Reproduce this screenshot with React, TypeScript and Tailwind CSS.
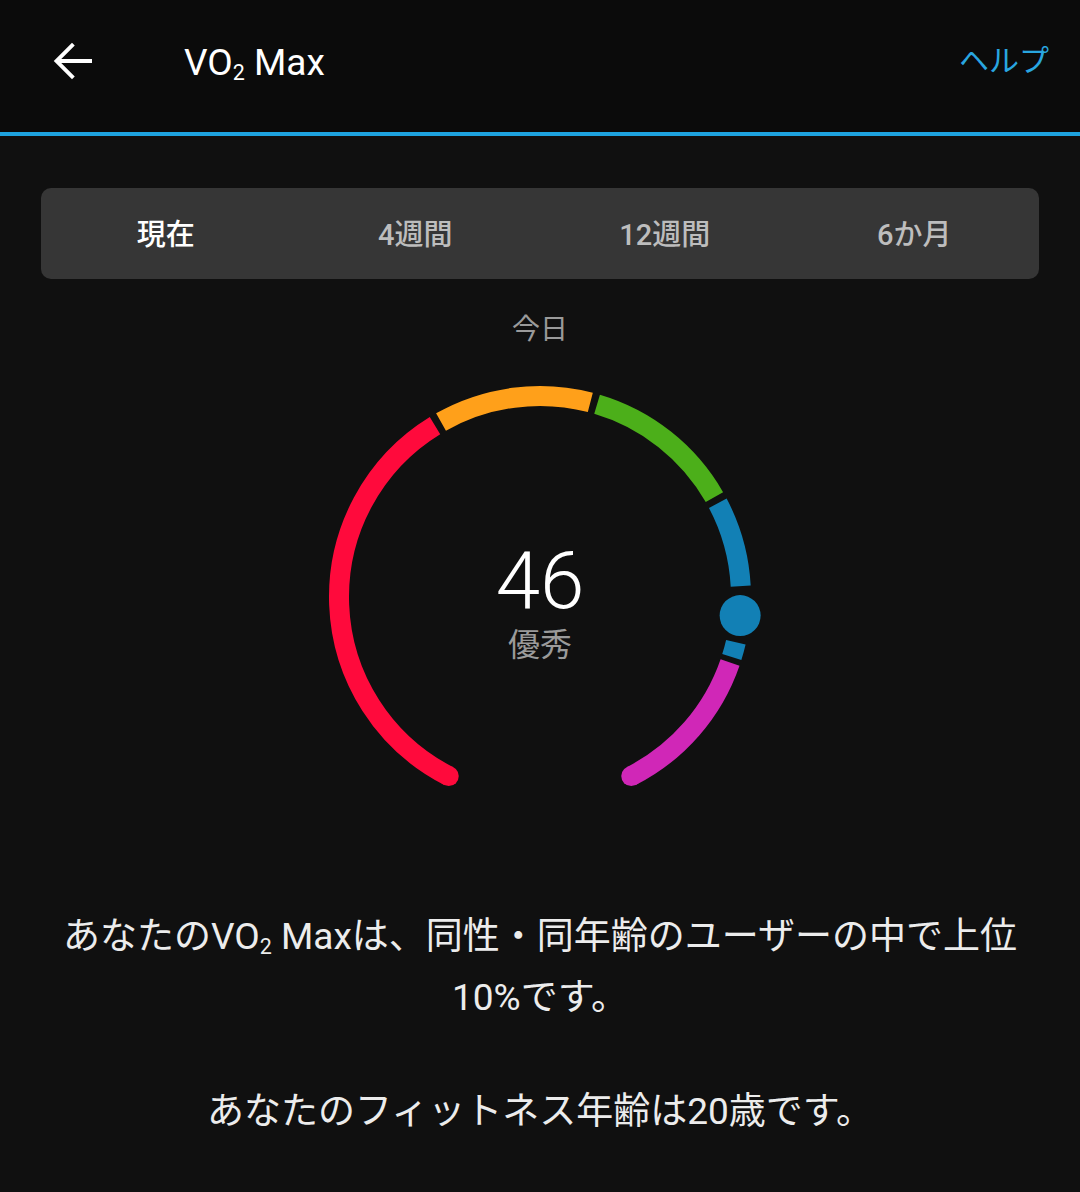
import React from "react";

const R = 201;
const CX = 240;
const CY = 240;

function pt(a: number): [number, number] {
  const t = (a * Math.PI) / 180;
  return [CX + R * Math.cos(t), CY + R * Math.sin(t)];
}

function arc(a1: number, a2: number): string {
  const [x1, y1] = pt(a1);
  const [x2, y2] = pt(a2);
  const large = a2 - a1 > 180 ? 1 : 0;
  return `M ${x1.toFixed(2)} ${y1.toFixed(2)} A ${R} ${R} 0 ${large} 1 ${x2.toFixed(2)} ${y2.toFixed(2)}`;
}

const segs: { a1: number; a2: number; color: string }[] = [
  { a1: 117, a2: 238.5, color: "#ff0a3c" },
  { a1: 240.5, a2: 284.5, color: "#ffa01a" },
  { a1: 286.5, a2: 330.2, color: "#4caf1a" },
  { a1: 332.2, a2: 356.9, color: "#1280b5" },
  { a1: 373, a2: 377.4, color: "#1280b5" },
  { a1: 379, a2: 423, color: "#d027b7" },
];

function Gauge() {
  const [sx, sy] = pt(117);
  const [ex, ey] = pt(63);
  const [dx, dy] = pt(5.3);
  return (
    <svg width="480" height="480" viewBox="0 0 480 480" className="block">
      {segs.map((s, i) => (
        <path
          key={i}
          d={arc(s.a1, s.a2)}
          fill="none"
          stroke={s.color}
          strokeWidth={20}
          strokeLinecap="butt"
        />
      ))}
      <circle cx={sx} cy={sy} r={10} fill="#ff0a3c" />
      <circle cx={ex} cy={ey} r={10} fill="#d027b7" />
      <circle cx={dx} cy={dy} r={20.5} fill="#1280b5" />
    </svg>
  );
}

export default function App() {
  const font = { fontFamily: 'Roboto, "Noto Sans CJK JP", sans-serif' };
  return (
    <div className="w-[1080px] min-h-[1192px] bg-[#101010]" style={font}>
      <header className="h-[132px] bg-[#0b0b0b] flex items-center pl-[42px] pr-[31px] pb-[10px]">
        <svg width="60" height="60" viewBox="0 0 24 24" className="block">
          <path
            d="M20 11.2H7.7l5.4-5.4L12 4.7l-7.3 7.3 7.3 7.3 1.1-1.1-5.4-5.4H20z"
            fill="#ffffff"
          />
        </svg>
        <div className="ml-[82px] text-[37px] text-white leading-none pt-[2px]">
          VO<span className="inline-block text-[0.58em] translate-y-[0.22em]">2</span> Max
        </div>
        <div className="ml-auto text-[30px] text-[#29a6e0] leading-none">ヘルプ</div>
      </header>
      <div className="h-[4px] bg-[#1ea3df]" />
      <main className="px-[41px] pt-[52px]">
        <div className="h-[91px] rounded-[10px] bg-[#363636] grid grid-cols-4 items-center text-[29px] font-medium pt-[4px]">
          <div className="text-center text-white">現在</div>
          <div className="text-center text-[#bdbdbd]">4週間</div>
          <div className="text-center text-[#bdbdbd]">12週間</div>
          <div className="text-center text-[#bdbdbd]">6か月</div>
        </div>
        <div className="mt-[31px] text-center text-[28px] leading-[39px] text-[#9a9a9a]">今日</div>
        <div className="relative w-[480px] h-[480px] mx-auto mt-[8px]">
          <Gauge />
          <div className="absolute inset-x-0 top-[184px] flex flex-col items-center">
            <div className="text-[80px] font-light leading-none text-white">46</div>
            <div className="mt-[8px] text-[32px] leading-none text-[#9a9a9a]">優秀</div>
          </div>
        </div>
        <div className="mt-[72px] text-center text-[37px] leading-[56px] text-[#ececec]">
          <p>
            あなたのVO<span className="inline-block text-[0.58em] translate-y-[0.22em]">2</span> Maxは、同性・同年齢のユーザーの中で上位
            <br />
            10%です。
          </p>
          <p className="mt-[58px]">あなたのフィットネス年齢は20歳です。</p>
        </div>
      </main>
    </div>
  );
}
